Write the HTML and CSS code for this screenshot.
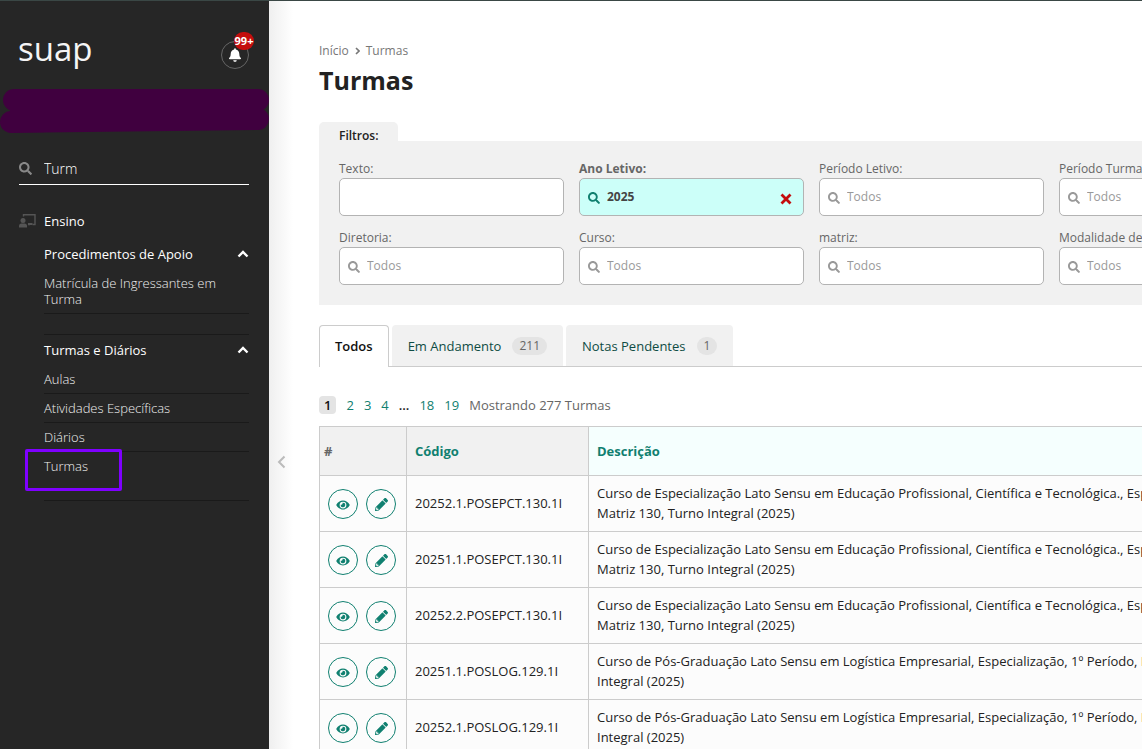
FILE: index.html
```
<!DOCTYPE html>
<html lang="pt-br">
<head>
    <meta charset="UTF-8">
    <meta name="viewport" content="width=device-width, initial-scale=1.0">
    <title>Turmas - SUAP</title>
    <link rel="stylesheet" href="styles.css">
</head>
<body>
    <svg class="icon-defs" aria-hidden="true">
        <symbol id="i-search" viewBox="0 0 512 512"><path d="M505 442.700 405.300 343c-4.500-4.500-10.600-7-17-7H372c27.600-35.300 44-79.700 44-128C416 93.100 322.900 0 208 0S0 93.100 0 208s93.100 208 208 208c48.300 0 92.700-16.400 128-44v16.300c0 6.400 2.500 12.500 7 17l99.700 99.700c9.400 9.400 24.600 9.400 33.900 0l28.300-28.300c9.400-9.400 9.400-24.600.1-34zM208 336c-70.700 0-128-57.200-128-128 0-70.700 57.200-128 128-128 70.700 0 128 57.200 128 128 0 70.700-57.200 128-128 128z"/></symbol>
        <symbol id="i-eye" viewBox="0 0 576 512"><path d="M572.500 241.400C518.300 135.600 410.900 64 288 64S57.700 135.600 3.500 241.400a32.400 32.400 0 0 0 0 29.200C57.700 376.400 165.100 448 288 448s230.300-71.600 284.500-177.400a32.400 32.400 0 0 0 0-29.200zM288 400a144 144 0 1 1 144-144 143.900 143.900 0 0 1-144 144zm0-240a95.300 95.300 0 0 0-25.300 3.800 47.900 47.900 0 0 1-66.900 66.900A95.800 95.800 0 1 0 288 160z"/></symbol>
        <symbol id="i-pencil" viewBox="0 0 512 512"><path d="M498 142l-46.600 46.600c-4.700 4.700-12.300 4.700-17 0L323.500 77.600c-4.700-4.700-4.700-12.300 0-17L370 14c18.700-18.700 49.100-18.700 67.900 0L498 74.100c18.800 18.700 18.800 49.100 0 67.900zm-214.100-41.900L21.700 362.300.4 483.900c-2.900 16.400 11.400 30.600 27.800 27.800l121.500-21.300 262.200-262.200c4.700-4.700 4.700-12.300 0-17l-111-111c-4.800-4.800-12.400-4.800-17-.1zM88 424h48v36.300l-64.500 11.300-31.100-31.100L51.700 376H88v48z"/></symbol>
        <symbol id="i-up" viewBox="0 0 12 8"><path d="M1.500 6.500 6 2l4.500 4.500" fill="none" stroke="currentColor" stroke-width="2.400"/></symbol>
    </svg>

    <div class="page">
        <aside class="sidebar">
            <div class="brand">
                <a href="#" class="logo">suap</a>
                <a href="#" class="bell" aria-label="Notificações">
                    <svg width="12" height="14" viewBox="0 0 448 512" fill="currentColor"><path d="M224 512c35.300 0 64-28.700 64-64H160c0 35.300 28.700 64 64 64zm215.400-149.700c-19.300-20.800-55.500-52-55.500-154.300 0-77.700-54.500-139.900-127.900-155.200V32a32 32 0 1 0-64 0v20.800C118.600 68.100 64.100 130.300 64.100 208c0 102.300-36.200 133.500-55.500 154.300C2.600 368.700 0 376.400 0 384c.1 16.400 13 32 32.100 32h383.800c19.100 0 32-15.600 32.100-32 0-7.600-2.700-15.300-8.600-21.700z"/></svg>
                    <span class="badge">99+</span>
                </a>
            </div>

            <svg class="user-mask" viewBox="0 0 269 46" aria-hidden="true">
                <g fill="none" stroke="#40003f" stroke-width="22" stroke-linecap="round">
                    <path d="M14 12H258"/>
                    <path d="M11 34 258 31"/>
                </g>
                <path d="M10 13H260V32H10z" fill="#40003f"/>
            </svg>

            <div class="menu-search">
                <svg class="icon" width="13" height="13"><use href="#i-search"/></svg>
                <input type="text" value="Turm" aria-label="Buscar menu">
            </div>

            <nav class="menu">
                <div class="menu-area">
                    <svg width="17" height="14" viewBox="0 0 17 14" fill="currentColor"><circle cx="4" cy="6.500" r="2.500"/><path d="M0 13.500V12q0-2.500 2.500-2.500h3Q8 9.500 8 12v1.500z"/><path d="M4.500 2.500V.800H16v9.700h-2.500M9 10.500h2" fill="none" stroke="currentColor" stroke-width="1.400"/><path d="M9 11V9h4.500v2z"/></svg>
                    <a href="#">Ensino</a>
                </div>
                <section class="menu-group">
                    <button class="menu-title">Procedimentos de Apoio <svg width="12" height="8"><use href="#i-up"/></svg></button>
                    <ul>
                        <li><a href="#">Matrícula de Ingressantes em Turma</a></li>
                    </ul>
                </section>
                <section class="menu-group divided">
                    <button class="menu-title">Turmas e Diários <svg width="12" height="8"><use href="#i-up"/></svg></button>
                    <ul>
                        <li><a href="#">Aulas</a></li>
                        <li><a href="#">Atividades Específicas</a></li>
                        <li><a href="#">Diários</a></li>
                        <li class="marked"><a href="#">Turmas</a></li>
                    </ul>
                </section>
            </nav>
        </aside>

        <div class="collapse">
            <button aria-label="Recolher menu">
                <svg width="9" height="14" viewBox="0 0 9 14"><path d="M7.500 1.500 2 7l5.500 5.500" fill="none" stroke="currentColor" stroke-width="2"/></svg>
            </button>
        </div>

        <main class="content">
            <nav class="breadcrumb">
                <a href="#">Início</a>
                <svg width="5" height="8" viewBox="0 0 5 8"><path d="M1 1l3 3-3 3" fill="none" stroke="currentColor" stroke-width="1.600"/></svg>
                <a href="#">Turmas</a>
            </nav>
            <h1>Turmas</h1>

            <form class="filters">
                <h2>Filtros:</h2>
                <div class="filter-grid">
                    <div class="field">
                        <label for="texto">Texto:</label>
                        <input type="text" id="texto">
                    </div>
                    <div class="field lookup active">
                        <label for="ano">Ano Letivo:</label>
                        <svg class="icon" width="12" height="12"><use href="#i-search"/></svg>
                        <input type="text" id="ano" value="2025">
                        <button type="button" class="clear" aria-label="Limpar">
                            <svg width="12" height="12" viewBox="0 0 12 12"><path d="M1.500 1.500l9 9M10.500 1.500l-9 9" stroke="currentColor" stroke-width="2.800"/></svg>
                        </button>
                    </div>
                    <div class="field lookup">
                        <label for="periodo">Período Letivo:</label>
                        <svg class="icon" width="12" height="12"><use href="#i-search"/></svg>
                        <input type="text" id="periodo" placeholder="Todos">
                    </div>
                    <div class="field lookup">
                        <label for="periodo-turma">Período Turma:</label>
                        <svg class="icon" width="12" height="12"><use href="#i-search"/></svg>
                        <input type="text" id="periodo-turma" placeholder="Todos">
                    </div>
                    <div class="field lookup">
                        <label for="diretoria">Diretoria:</label>
                        <svg class="icon" width="12" height="12"><use href="#i-search"/></svg>
                        <input type="text" id="diretoria" placeholder="Todos">
                    </div>
                    <div class="field lookup">
                        <label for="curso">Curso:</label>
                        <svg class="icon" width="12" height="12"><use href="#i-search"/></svg>
                        <input type="text" id="curso" placeholder="Todos">
                    </div>
                    <div class="field lookup">
                        <label for="matriz">matriz:</label>
                        <svg class="icon" width="12" height="12"><use href="#i-search"/></svg>
                        <input type="text" id="matriz" placeholder="Todos">
                    </div>
                    <div class="field lookup">
                        <label for="modalidade">Modalidade de Ensino:</label>
                        <svg class="icon" width="12" height="12"><use href="#i-search"/></svg>
                        <input type="text" id="modalidade" placeholder="Todos">
                    </div>
                </div>
            </form>

            <nav class="tabs">
                <a href="#" class="current">Todos</a>
                <a href="#">Em Andamento <span>211</span></a>
                <a href="#">Notas Pendentes <span>1</span></a>
            </nav>

            <div class="pagination">
                <strong>1</strong>
                <a href="#">2</a>
                <a href="#">3</a>
                <a href="#">4</a>
                <b>...</b>
                <a href="#">18</a>
                <a href="#">19</a>
                <span>Mostrando 277 Turmas</span>
            </div>

            <table>
                <thead>
                    <tr>
                        <th class="col-actions">#</th>
                        <th class="col-code"><a href="#">Código</a></th>
                        <th class="sorted"><a href="#">Descrição</a></th>
                    </tr>
                </thead>
                <tbody>
                    <tr>
                        <td><div class="actions"><a href="#" aria-label="Ver"><svg width="14" height="12"><use href="#i-eye"/></svg></a><a href="#" aria-label="Editar"><svg width="13" height="13"><use href="#i-pencil"/></svg></a></div></td>
                        <td>20252.1.POSEPCT.130.1I</td>
                        <td>Curso de Especialização Lato Sensu em Educação Profissional, Científica e Tecnológica., Especialização, 1º Período,<br>Matriz 130, Turno Integral (2025)</td>
                    </tr>
                    <tr>
                        <td><div class="actions"><a href="#" aria-label="Ver"><svg width="14" height="12"><use href="#i-eye"/></svg></a><a href="#" aria-label="Editar"><svg width="13" height="13"><use href="#i-pencil"/></svg></a></div></td>
                        <td>20251.1.POSEPCT.130.1I</td>
                        <td>Curso de Especialização Lato Sensu em Educação Profissional, Científica e Tecnológica., Especialização, 1º Período,<br>Matriz 130, Turno Integral (2025)</td>
                    </tr>
                    <tr>
                        <td><div class="actions"><a href="#" aria-label="Ver"><svg width="14" height="12"><use href="#i-eye"/></svg></a><a href="#" aria-label="Editar"><svg width="13" height="13"><use href="#i-pencil"/></svg></a></div></td>
                        <td>20252.2.POSEPCT.130.1I</td>
                        <td>Curso de Especialização Lato Sensu em Educação Profissional, Científica e Tecnológica., Especialização, 2º Período,<br>Matriz 130, Turno Integral (2025)</td>
                    </tr>
                    <tr>
                        <td><div class="actions"><a href="#" aria-label="Ver"><svg width="14" height="12"><use href="#i-eye"/></svg></a><a href="#" aria-label="Editar"><svg width="13" height="13"><use href="#i-pencil"/></svg></a></div></td>
                        <td>20251.1.POSLOG.129.1I</td>
                        <td>Curso de Pós-Graduação Lato Sensu em Logística Empresarial, Especialização, 1º Período, Matriz 129, Turno<br>Integral (2025)</td>
                    </tr>
                    <tr>
                        <td><div class="actions"><a href="#" aria-label="Ver"><svg width="14" height="12"><use href="#i-eye"/></svg></a><a href="#" aria-label="Editar"><svg width="13" height="13"><use href="#i-pencil"/></svg></a></div></td>
                        <td>20252.1.POSLOG.129.1I</td>
                        <td>Curso de Pós-Graduação Lato Sensu em Logística Empresarial, Especialização, 1º Período, Matriz 129, Turno<br>Integral (2025)</td>
                    </tr>
                </tbody>
            </table>
        </main>
    </div>
</body>
</html>
```
FILE: styles.css
```
*, *::after {
    box-sizing: border-box;
}
body {
    margin: 0;
    font-family: "Open Sans", "Noto Sans", sans-serif;
    font-size: 13px;
    line-height: 20px;
    color: #222;
    background: #fff;
}
a {
    color: inherit;
    text-decoration: none;
}
button {
    font: inherit;
    color: inherit;
    background: none;
    border: 0;
    padding: 0;
    cursor: pointer;
}
input {
    font: inherit;
    min-width: 0;
}
svg {
    flex: none;
}
.icon {
    fill: currentColor;
}
.icon-defs {
    position: absolute;
    width: 0;
    height: 0;
}
.page {
    display: flex;
    height: 100vh;
    overflow: hidden;
    border-top: 1px solid #3a4745;
}

/* sidebar */
.sidebar {
    flex: none;
    width: 269px;
    background: #262626;
    color: #fff;
}
.brand {
    display: flex;
    justify-content: space-between;
    align-items: flex-end;
    padding: 28px 20px 19px 18px;
}
.logo {
    font-size: 33px;
    line-height: 40px;
    color: #f5f5f5;
}
.bell {
    position: relative;
    display: flex;
    align-items: center;
    justify-content: center;
    width: 28px;
    height: 28px;
    border: 1px solid #666;
    border-radius: 50%;
}
.badge {
    position: absolute;
    top: -10px;
    right: -6px;
    width: 20px;
    height: 18px;
    border-radius: 9px;
    background: #c40d0d;
    font-size: 11px;
    line-height: 18px;
    font-weight: 700;
    text-align: center;
}
.user-mask {
    display: block;
    width: 100%;
    height: 46px;
}
.menu-search {
    display: flex;
    align-items: center;
    gap: 12px;
    height: 32px;
    margin: 19px 20px 0 19px;
    border-bottom: 1px solid #fff;
    color: #888;
}
.menu-search input {
    flex: 1;
    border: 0;
    padding: 0;
    background: none;
    color: #fff;
    font-size: 14px;
    font-weight: 300;
    outline: none;
}
.menu {
    padding: 26px 20px 0 44px;
}
.menu-area {
    display: flex;
    align-items: center;
    gap: 8px;
    margin-left: -25px;
    color: #555;
}
.menu-area a {
    color: #fff;
    font-weight: 500;
}
.menu-group {
    padding-top: 13px;
}
.menu-group.divided {
    margin-top: 20px;
    padding-top: 5px;
    border-top: 1px solid #1a1a1a;
}
.menu-title {
    display: flex;
    align-items: center;
    justify-content: space-between;
    width: 100%;
    font-weight: 500;
}
.menu ul {
    list-style: none;
    margin: 5px 0 0;
    padding: 0;
}
.menu li {
    padding: 6px 0;
    border-bottom: 1px solid #1a1a1a;
    line-height: 16px;
    font-weight: 300;
    color: #f0f0f0;
}
.menu li.marked {
    position: relative;
    padding-bottom: 26px;
}
.marked::after {
    content: "";
    position: absolute;
    left: -19px;
    top: -3px;
    width: 97px;
    height: 42px;
    border: 3px solid #7f00ff;
    border-radius: 2px;
}

/* collapse strip */
.collapse {
    flex: none;
    width: 24px;
    padding-top: 453px;
    background: linear-gradient(to right, #efefef, #fff);
    color: #bbb;
    text-align: center;
}

/* content */
.content {
    flex: 1;
    min-width: 0;
    padding: 40px 0 0 26px;
}
.breadcrumb {
    display: flex;
    align-items: center;
    gap: 6px;
    color: #777;
    font-size: 12px;
}
h1 {
    margin: 2px 0 25px;
    font-size: 25px;
    line-height: 34px;
}
.filters h2 {
    width: 79px;
    margin: 0;
    padding: 6px 0 0 20px;
    border-radius: 5px 5px 0 0;
    background: #f1f1f1;
    font-size: 12px;
    line-height: 16px;
    height: 19px;
    font-weight: 600;
}
.filter-grid {
    display: grid;
    grid-template-columns: repeat(4, 225px);
    gap: 14px 15px;
    padding: 20px;
    background: #f1f1f1;
}
.field {
    position: relative;
    display: flex;
    flex-direction: column;
}
.field label {
    height: 17px;
    font-size: 12px;
    line-height: 16px;
    color: #666;
    white-space: nowrap;
}
.field input {
    width: 100%;
    height: 38px;
    padding: 0 10px 2px;
    border: 1px solid #b3b3b3;
    border-radius: 5px;
    background: #fff;
    font-size: 12px;
}
.field input::placeholder {
    color: #999;
}
.lookup input {
    padding-left: 27px;
}
.lookup .icon {
    position: absolute;
    left: 9px;
    bottom: 12px;
    color: #999;
}
.active label {
    font-weight: 700;
}
.active input {
    background: #ccfff9;
    color: #444;
    font-weight: 700;
}
.active .icon {
    color: #108070;
}
.clear {
    position: absolute;
    right: 12px;
    bottom: 11px;
    height: 12px;
    line-height: 0;
    color: #c40d0d;
}

/* tabs */
.tabs {
    display: flex;
    gap: 3px;
    margin-top: 20px;
    border-bottom: 1px solid #ccc;
}
.tabs a {
    display: flex;
    align-items: center;
    gap: 11px;
    height: 41px;
    padding: 0 16px;
    border-radius: 4px 4px 0 0;
    background: #f1f1f1;
    color: #0f4c44;
}
.tabs .current {
    height: 42px;
    margin-bottom: -1px;
    padding: 0 15px 2px;
    border: 1px solid #ccc;
    border-bottom: 0;
    background: #fff;
    color: #111;
    font-weight: 600;
}
.tabs span {
    padding: 0 7px;
    border-radius: 9px;
    background: #e4e4e4;
    color: #666;
    font-size: 12px;
    line-height: 18px;
}
.pagination {
    display: flex;
    align-items: center;
    gap: 10px;
    margin: 29px 0 12px;
    line-height: 18px;
    color: #108070;
}
.pagination strong {
    padding: 0 5px;
    border-radius: 4px;
    background: #e4e4e4;
    color: #111;
    font-weight: 600;
}
.pagination b {
    color: #222;
    font-weight: 600;
}
.pagination span {
    color: #666;
}

/* table */
table {
    width: 1000px;
    border-collapse: collapse;
    background: #fcfcfc;
}
th, td {
    height: 56px;
    padding: 0 8px 2px;
    border: 1px solid #ccc;
    text-align: left;
    white-space: nowrap;
}
th {
    height: 49px;
    padding-bottom: 0;
    background: #f1f1f1;
    color: #108070;
    font-weight: 700;
}
td:first-child {
    padding-bottom: 0;
}
.col-actions {
    width: 87px;
    padding: 0 4px;
    color: #666;
}
.col-code {
    width: 182px;
}
th.sorted {
    background: #f5fffe;
}
.actions {
    display: flex;
    gap: 8px;
}
.actions a {
    display: flex;
    align-items: center;
    justify-content: center;
    width: 30px;
    height: 30px;
    padding-top: 2px;
    border: 1px solid #108070;
    border-radius: 50%;
    color: #108070;
}
.actions svg {
    fill: currentColor;
}
```
